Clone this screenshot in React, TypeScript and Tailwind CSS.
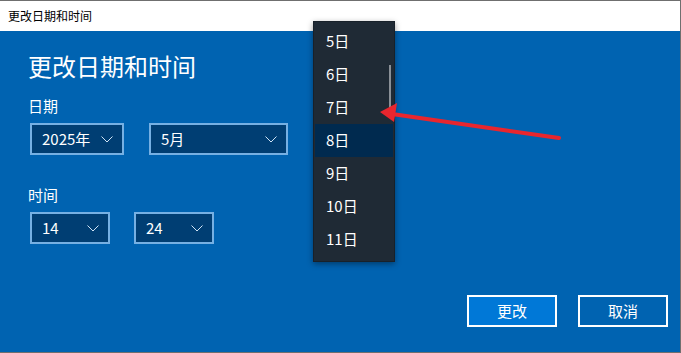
import React from 'react';

const font = { fontFamily: '"Noto Sans CJK SC", "Noto Sans", sans-serif' };

const Chevron: React.FC = () => (
  <svg width="12" height="7" viewBox="0 0 12 7" className="shrink-0">
    <path d="M0.5 0.5 L6 6 L11.5 0.5" fill="none" stroke="#cfe3f5" strokeWidth="1" />
  </svg>
);

const Select: React.FC<{ value: string; className: string }> = ({ value, className }) => (
  <div
    className={`h-[32px] border-2 border-[#76b0e3] bg-[#003e73] flex items-center justify-between pl-[10px] pr-[9px] text-[15px] text-white ${className}`}
  >
    <span>{value}</span>
    <Chevron />
  </div>
);

const days = ['5日', '6日', '7日', '8日', '9日', '10日', '11日'];

export default function App() {
  return (
    <div
      style={font}
      className="relative w-[681px] h-[353px] flex flex-col border-t border-r border-b border-[#6f6f6f] bg-white overflow-hidden"
    >
      {/* title bar */}
      <div className="h-[30px] shrink-0 flex items-center pl-[8px] text-[12px] text-black">更改日期和时间</div>

      {/* body */}
      <div className="flex-1 flex flex-col bg-[#0063b1] pl-[28px] pr-[12px] pt-[19px] pb-[25px] text-white">
        <h1 className="text-[24px] leading-[32px] font-normal">更改日期和时间</h1>

        <div className="mt-[14px] text-[15px] leading-[20px]">日期</div>
        <div className="mt-[7px] ml-[2px] flex gap-[25px]">
          <Select value="2025年" className="w-[94px]" />
          <Select value="5月" className="w-[139px]" />
        </div>

        <div className="mt-[30px] text-[15px] leading-[20px]">时间</div>
        <div className="mt-[7px] ml-[2px] flex gap-[24px]">
          <Select value="14" className="w-[80px]" />
          <Select value="24" className="w-[80px]" />
        </div>

        <div className="mt-auto flex justify-end gap-[21px]">
          <button className="w-[90px] h-[32px] border-2 border-white bg-[#0078d7] text-[15px] text-white">更改</button>
          <button className="w-[90px] h-[32px] border-2 border-white bg-[#0063b1] text-[15px] text-white">取消</button>
        </div>
      </div>

      {/* open day list */}
      <div className="absolute left-[313px] top-[20px] w-[82px] h-[241px] bg-[#1f2a35] border border-[#18212a] shadow-[0_2px_6px_rgba(0,0,0,0.4)] pt-[3px]">
        {days.map((d) => (
          <div
            key={d}
            className={`h-[33px] flex items-center pl-[11px] mx-[1px] text-[15px] text-white ${d === '8日' ? 'bg-[#002a4f]' : ''}`}
          >
            {d}
          </div>
        ))}
        <div className="absolute left-[75px] top-[43px] w-[2px] h-[44px] bg-[#8a9097]" />
      </div>

      {/* annotation arrow */}
      <svg className="absolute left-0 top-0 pointer-events-none" width="681" height="353">
        <line x1="559" y1="137" x2="392" y2="113" stroke="#e8262e" strokeWidth="4" strokeLinecap="round" />
        <polygon points="380,111 397,102 394,121" fill="#e8262e" />
      </svg>
    </div>
  );
}
